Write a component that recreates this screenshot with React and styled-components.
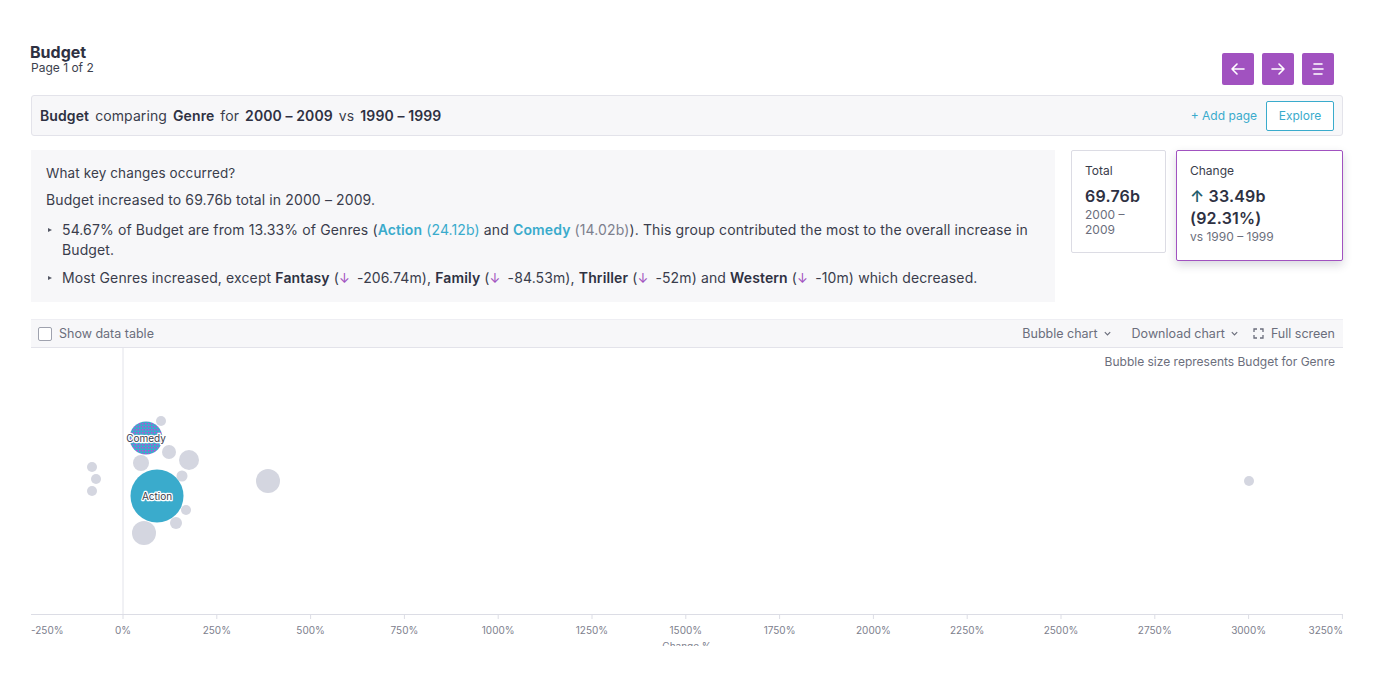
import React from 'react';
import styled, { createGlobalStyle } from 'styled-components';

const GlobalStyle = createGlobalStyle`
  body {
    margin: 0;
    background: #ffffff;
    font-family: Inter, "Noto Sans", sans-serif;
    color: #2e3142;
  }
`

const colors = {
  text: '#2e3142',
  muted: '#6b6e7c',
  purple: '#a152c0',
  teal: '#3aabcc',
  panel: '#f7f7f9',
  border: '#e3e3ea',
  bubble: '#d4d6e0',
}

const Page = styled.div`
  padding: 44px 57px 0 31px;
  height: 654px;
  overflow: hidden;
`

const Header = styled.div`
  display: flex;
  justify-content: space-between;
  align-items: flex-start;
  height: 41px;
  margin-bottom: 10px;
`

const Title = styled.div`
  font-size: 16px;
  font-weight: 700;
  line-height: 17px;
  margin-left: -1px;
`

const SubTitle = styled.div`
  font-size: 12px;
  line-height: 14px;
  color: #3c3f4e;
`

const NavButtons = styled.div`
  display: flex;
  gap: 8px;
  margin-top: 9px;
  margin-right: 9px;
`

const NavButton = styled.div`
  width: 32px;
  height: 32px;
  border-radius: 2px;
  background: ${colors.purple};
  display: flex;
  align-items: center;
  justify-content: center;
`

const QueryBar = styled.div`
  height: 41px;
  box-sizing: border-box;
  border: 1px solid ${colors.border};
  border-radius: 3px;
  background: ${colors.panel};
  display: flex;
  align-items: center;
  padding: 0 8px;
  font-size: 14px;
`

const QueryText = styled.div`
  flex: 1;
  color: #3a3d4c;
  letter-spacing: 0.1px;
  b { font-weight: 600; color: ${colors.text}; }
  span { margin: 0 6px; }
`

const AddPage = styled.div`
  color: ${colors.teal};
  font-size: 12px;
  margin-right: 9px;
`

const Explore = styled.div`
  width: 68px;
  height: 30px;
  box-sizing: border-box;
  border: 1px solid ${colors.teal};
  border-radius: 2px;
  background: #fff;
  color: ${colors.teal};
  font-size: 12px;
  display: flex;
  align-items: center;
  justify-content: center;
`

const InsightRow = styled.div`
  display: flex;
  align-items: flex-start;
  margin-top: 14px;
`

const Insight = styled.div`
  width: 1024px;
  height: 152px;
  box-sizing: border-box;
  background: ${colors.panel};
  padding: 13px 15px;
  font-size: 14px;
  letter-spacing: 0.12px;
  color: #3a3d4c;
  line-height: 20px;
`

const InsightHead = styled.div`
  font-size: 13.5px;
  margin-bottom: 7px;
`

const InsightLine = styled.div`
  margin-bottom: 10px;
`

const Bullet = styled.div`
  position: relative;
  padding-left: 16px;
  margin-bottom: 8px;
  &::before {
    content: '';
    position: absolute;
    left: 2px;
    top: 8px;
    border-left: 4px solid #555866;
    border-top: 2.5px solid transparent;
    border-bottom: 2.5px solid transparent;
  }
  b { font-weight: 600; color: ${colors.text}; }
`

const Hl = styled.span`
  color: ${colors.teal};
  font-weight: ${p => (p.$bold ? 600 : 400)};
`

const Down = styled.span`
  color: ${colors.purple};
  font-size: 13px;
  margin-right: 3px;
`

const Card = styled.div`
  box-sizing: border-box;
  width: ${p => p.$w}px;
  height: ${p => p.$h}px;
  margin-left: ${p => p.$ml}px;
  border: 1px solid ${p => (p.$active ? colors.purple : '#dcdce4')};
  border-radius: 2px;
  background: #fff;
  padding: 12px 13px;
  box-shadow: ${p => (p.$active ? '0 4px 10px rgba(40,40,70,0.18)' : 'none')};
`

const CardLabel = styled.div`
  font-size: 12px;
  line-height: 16px;
  color: #3a3d4c;
  margin-bottom: 6px;
`

const CardValue = styled.div`
  font-size: 16px;
  font-weight: 600;
  line-height: 22px;
  letter-spacing: 0.2px;
  color: ${colors.text};
`

const CardSub = styled.div`
  font-size: 12px;
  line-height: 15px;
  color: ${colors.muted};
`

const Toolbar = styled.div`
  margin-top: 17px;
  height: 29px;
  box-sizing: border-box;
  background: ${colors.panel};
  border-top: 1px solid #eeeef3;
  border-bottom: 1px solid ${colors.border};
  display: flex;
  align-items: center;
  padding: 0 8px 0 7px;
  font-size: 12.5px;
  color: ${colors.muted};
`

const Check = styled.div`
  width: 12px;
  height: 12px;
  border: 1px solid #9fa2ae;
  border-radius: 2px;
  background: #fff;
  margin-right: 7px;
`

const ToolItem = styled.div`
  display: flex;
  align-items: center;
  gap: 5px;
  margin-left: ${p => p.$ml || 0}px;
`

const Spacer = styled.div`
  flex: 1;
`

const ChartWrap = styled.div`
  position: relative;
  height: 298px;
`

const Caption = styled.div`
  position: absolute;
  right: 8px;
  top: 6px;
  font-size: 12px;
  color: ${colors.muted};
`

const Chevron = () => (
  <svg width="9" height="9" viewBox="0 0 10 10">
    <path d="M2 3.5 L5 6.5 L8 3.5" fill="none" stroke="#6b6e7c" strokeWidth="1.3" />
  </svg>
)

const zeroX = 92
const step = 93.8
const xOf = v => zeroX + (v / 250) * step
const ticks = [-250, 0, 250, 500, 750, 1000, 1250, 1500, 1750, 2000, 2250, 2500, 2750, 3000, 3250]

const bubbles = [
  { x: 161, y: 421, r: 5 },
  { x: 169, y: 452, r: 7 },
  { x: 189, y: 460, r: 10 },
  { x: 141, y: 463, r: 8 },
  { x: 182, y: 476, r: 5.5 },
  { x: 186, y: 510, r: 5 },
  { x: 176, y: 523, r: 6 },
  { x: 144, y: 533, r: 12 },
  { x: 268, y: 481, r: 12 },
  { x: 92, y: 467, r: 5 },
  { x: 96, y: 479, r: 5 },
  { x: 92, y: 491, r: 5 },
  { x: 1249, y: 481, r: 5 },
]

const BubbleChart = () => (
  <svg width="1312" height="298" style={{ display: 'block' }}>
    <defs>
      <pattern id="dots" width="3" height="3" patternUnits="userSpaceOnUse">
        <rect width="3" height="3" fill={colors.teal} />
        <rect width="1.5" height="1.5" fill="#c048d6" />
      </pattern>
    </defs>
    <line x1={zeroX} y1="0" x2={zeroX} y2="266" stroke="#e2e3ea" strokeWidth="1" />
    <line x1="0" y1="266.5" x2="1312" y2="266.5" stroke="#dcdde5" strokeWidth="1" />
    {ticks.map(t => (
      <g key={t}>
        <line x1={xOf(t)} y1="266" x2={xOf(t)} y2="271" stroke="#dcdde5" />
        <text
          x={t === -250 ? 0 : t === 3250 ? 1312 : xOf(t)}
          y="286"
          fontSize="10"
          fill="#7d808d"
          textAnchor={t === -250 ? 'start' : t === 3250 ? 'end' : 'middle'}
          fontFamily="Inter, sans-serif"
        >
          {t}%
        </text>
      </g>
    ))}
    {bubbles.map((b, i) => (
      <circle key={i} cx={b.x - 31} cy={b.y - 348} r={b.r} fill={colors.bubble} />
    ))}
    <circle cx={146 - 31} cy={438 - 348} r="16.5" fill="url(#dots)" />
    <circle cx={157 - 31} cy={496 - 348} r="26.5" fill={colors.teal} />
    <g fontSize="10" fontFamily="Inter, sans-serif" textAnchor="middle" fill="#3a3d4c"
       stroke="#fff" strokeWidth="2.5" paintOrder="stroke" strokeLinejoin="round">
      <text x={146 - 31} y={442 - 348}>Comedy</text>
      <text x={157 - 31} y={500 - 348}>Action</text>
    </g>
    <text x="656" y="302" fontSize="10" fill="#7d808d" textAnchor="middle" fontFamily="Inter, sans-serif">Change %</text>
  </svg>
)

export default function App() {
  return (
    <>
      <GlobalStyle />
      <Page>
        <Header>
          <div>
            <Title>Budget</Title>
            <SubTitle>Page 1 of 2</SubTitle>
          </div>
          <NavButtons>
            <NavButton>
              <svg width="18" height="18" viewBox="0 0 18 18">
                <path d="M15 9 H3 M8 4 L3 9 L8 14" fill="none" stroke="#fff" strokeWidth="1.6" strokeLinecap="round" strokeLinejoin="round" />
              </svg>
            </NavButton>
            <NavButton>
              <svg width="18" height="18" viewBox="0 0 18 18">
                <path d="M3 9 H15 M10 4 L15 9 L10 14" fill="none" stroke="#fff" strokeWidth="1.6" strokeLinecap="round" strokeLinejoin="round" />
              </svg>
            </NavButton>
            <NavButton>
              <svg width="18" height="18" viewBox="0 0 18 18">
                <path d="M5 4 H13 M4 9 H14 M5 14 H13" fill="none" stroke="#fff" strokeWidth="1.6" strokeLinecap="round" />
              </svg>
            </NavButton>
          </NavButtons>
        </Header>

        <QueryBar>
          <QueryText>
            <b>Budget</b><span>comparing</span><b>Genre</b><span>for</span><b>2000 – 2009</b><span>vs</span><b>1990 – 1999</b>
          </QueryText>
          <AddPage>+ Add page</AddPage>
          <Explore>Explore</Explore>
        </QueryBar>

        <InsightRow>
          <Insight>
            <InsightHead>What key changes occurred?</InsightHead>
            <InsightLine>Budget increased to 69.76b total in 2000 – 2009.</InsightLine>
            <Bullet>
              54.67% of Budget are from 13.33% of Genres (<Hl $bold>Action</Hl> <Hl>(24.12b)</Hl> and <Hl $bold>Comedy</Hl> <span style={{ color: '#7d808d' }}>(14.02b)</span>). This group contributed the most to the overall increase in Budget.
            </Bullet>
            <Bullet>
              Most Genres increased, except <b>Fantasy</b> (<Down>↓</Down> -206.74m), <b>Family</b> (<Down>↓</Down> -84.53m), <b>Thriller</b> (<Down>↓</Down> -52m) and <b>Western</b> (<Down>↓</Down> -10m) which decreased.
            </Bullet>
          </Insight>
          <Card $w={95} $h={103} $ml={16}>
            <CardLabel>Total</CardLabel>
            <CardValue>69.76b</CardValue>
            <CardSub>2000 –<br />2009</CardSub>
          </Card>
          <Card $w={167} $h={111} $ml={10} $active>
            <CardLabel>Change</CardLabel>
            <CardValue><span style={{ color: '#1f5d6e' }}>↑</span> 33.49b<br />(92.31%)</CardValue>
            <CardSub>vs 1990 – 1999</CardSub>
          </Card>
        </InsightRow>

        <Toolbar>
          <Check />
          <span>Show data table</span>
          <Spacer />
          <ToolItem>Bubble chart <Chevron /></ToolItem>
          <ToolItem $ml={20}>Download chart <Chevron /></ToolItem>
          <ToolItem $ml={14}>
            <svg width="11" height="11" viewBox="0 0 11 11">
              <path d="M1 4 V1 H4 M7 1 H10 V4 M10 7 V10 H7 M4 10 H1 V7" fill="none" stroke="#6b6e7c" strokeWidth="1.3" />
            </svg>
            <span style={{ marginLeft: 2 }}>Full screen</span>
          </ToolItem>
        </Toolbar>

        <ChartWrap>
          <Caption>Bubble size represents Budget for Genre</Caption>
          <BubbleChart />
        </ChartWrap>
      </Page>
    </>
  )
}
